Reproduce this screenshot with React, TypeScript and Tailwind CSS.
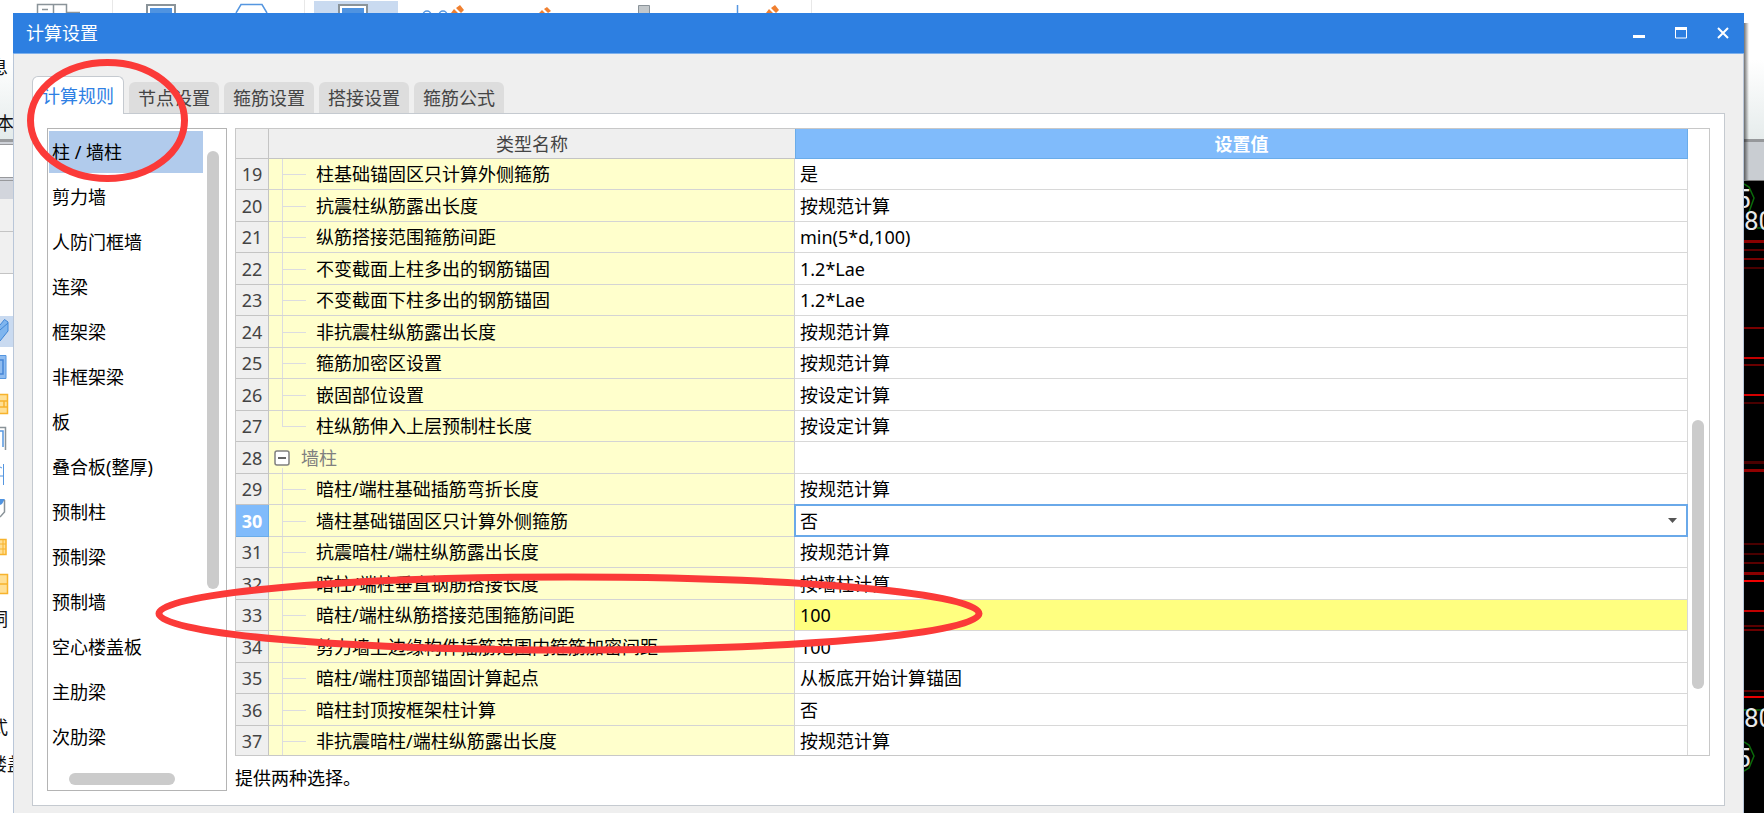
import React from 'react';
import clsx from 'clsx';

interface Setting {
  no: number;
  name: string;
  value: string;
  kind?: 'group' | 'last';
  editing?: boolean;
  marked?: boolean;
}

const tabs = ['计算规则', '节点设置', '箍筋设置', '搭接设置', '箍筋公式'];

const categories = [
  '柱 / 墙柱', '剪力墙', '人防门框墙', '连梁', '框架梁', '非框架梁', '板',
  '叠合板(整厚)', '预制柱', '预制梁', '预制墙', '空心楼盖板', '主肋梁', '次肋梁',
];

const settings: Setting[] = [
  { no: 19, name: '柱基础锚固区只计算外侧箍筋', value: '是' },
  { no: 20, name: '抗震柱纵筋露出长度', value: '按规范计算' },
  { no: 21, name: '纵筋搭接范围箍筋间距', value: 'min(5*d,100)' },
  { no: 22, name: '不变截面上柱多出的钢筋锚固', value: '1.2*Lae' },
  { no: 23, name: '不变截面下柱多出的钢筋锚固', value: '1.2*Lae' },
  { no: 24, name: '非抗震柱纵筋露出长度', value: '按规范计算' },
  { no: 25, name: '箍筋加密区设置', value: '按规范计算' },
  { no: 26, name: '嵌固部位设置', value: '按设定计算' },
  { no: 27, name: '柱纵筋伸入上层预制柱长度', value: '按设定计算', kind: 'last' },
  { no: 28, name: '墙柱', value: '', kind: 'group' },
  { no: 29, name: '暗柱/端柱基础插筋弯折长度', value: '按规范计算' },
  { no: 30, name: '墙柱基础锚固区只计算外侧箍筋', value: '否', editing: true },
  { no: 31, name: '抗震暗柱/端柱纵筋露出长度', value: '按规范计算' },
  { no: 32, name: '暗柱/端柱垂直钢筋搭接长度', value: '按墙柱计算' },
  { no: 33, name: '暗柱/端柱纵筋搭接范围箍筋间距', value: '100', marked: true },
  { no: 34, name: '剪力墙上边缘构件插筋范围内箍筋加密间距', value: '100' },
  { no: 35, name: '暗柱/端柱顶部锚固计算起点', value: '从板底开始计算锚固' },
  { no: 36, name: '暗柱封顶按框架柱计算', value: '否' },
  { no: 37, name: '非抗震暗柱/端柱纵筋露出长度', value: '按规范计算' },
];

// Dimension lines in the drawing area: [y, thickness, colour]
const cadLines: [number, number, string][] = [
  [240, 3, '#8a0000'], [249, 2, '#5a0000'], [258, 2, '#7a0000'], [267, 2, '#4a0000'],
  [327, 2, '#7a0000'], [357, 2, '#c40000'], [364, 2, '#6a0000'], [394, 2, '#d40000'],
  [402, 2, '#4a0000'], [461, 3, '#4a0000'], [469, 3, '#900000'], [543, 2, '#4a0000'],
  [553, 2, '#4a0000'], [562, 2, '#5a0000'], [572, 3, '#8a0000'], [580, 2, '#f00000'],
  [610, 2, '#c00000'], [625, 2, '#5a0000'], [629, 2, '#6a0000'], [690, 2, '#5a0000'],
  [696, 2, '#e80000'],
];

const Toolbar: React.FC = () => (
  <div className="h-[13px] shrink-0 overflow-hidden bg-white">
    <svg width="900" height="13" fill="none" className="block">
      <path d="M37.5 13V4.5h29V13M53.5 4v9M42 9.5h6M67 12.5h13" stroke="#8a9399" strokeWidth="1.5" />
      <path d="M112.5 0v13M304.5 0v13M811.5 0v13" stroke="#e8e8e8" />
      <path d="M147 13V5h28v8" stroke="#8a9399" strokeWidth="2" />
      <path d="M150 8h22v5h-22z" fill="#4f93e0" />
      <path d="M236 13l5-8.500h21l5 8.500" stroke="#5596e0" strokeWidth="1.5" />
      <path d="M314 1h84v12h-84z" fill="#c9daf0" />
      <path d="M339 13V5h28v8" fill="#fff" stroke="#8a9399" strokeWidth="2" />
      <path d="M342 8h22v5h-22z" fill="#4f93e0" />
      <circle cx="427" cy="15" r="4" stroke="#5596e0" strokeWidth="1.5" />
      <circle cx="443" cy="15" r="4" stroke="#5596e0" strokeWidth="1.5" />
      <g fill="#f08030">
        <path d="M460 5l4 5-3 3-5-5zM454 9l4 4h-7z" />
        <path d="M547 7l4 4-3 2-4-4zM542 10l3 3h-6z" />
        <path d="M775 5l4 5-3 3-5-5zM769 9l4 4h-7z" />
      </g>
      <path d="M638.500 13V5.500h11V13" fill="#c3c8cb" stroke="#8a9399" />
      <path d="M737.500 5v8" stroke="#5596e0" strokeWidth="1.5" />
    </svg>
  </div>
);

const SideLabel: React.FC<{ y: number; x: number; text: string }> = ({ y, x, text }) => (
  <text x={x} y={y} fontSize="18" fill="#111">{text}</text>
);

// Right edge of the main window's navigation pane
const SideStrip: React.FC = () => (
  <div className="w-[13px] shrink-0 overflow-hidden bg-white">
    <svg width="13" height="800" viewBox="0 13 13 800" fill="none" className="block">
      <defs>
        <linearGradient id="ribbon" x1="0" y1="0" x2="0" y2="1">
          <stop offset="0" stopColor="#ffffff" />
          <stop offset="1" stopColor="#e4ebeb" />
        </linearGradient>
      </defs>
      <path d="M0 60h13v79H0z" fill="url(#ribbon)" />
      <path d="M0 139h13v3H0z" fill="#9a9c9f" />
      <path d="M0 142h13v3H0z" fill="#cfd2d8" />
      <path d="M0 144h13v1H0zM0 177h13v1H0zM0 180h13v1H0z" fill="#98999c" />
      <path d="M0 178h13v2H0zM0 181h13v18H0z" fill="#d2d5dc" />
      <path d="M0 199h13v74H0z" fill="#f0f0f0" />
      <path d="M0 231.500h13M0 273.500h13" stroke="#c4c4c4" />
      <path d="M0 316h13v31H0z" fill="#c9daf0" />
      <path d="M0 325l4.500-5.500L8 322v9l-8 10z" fill="#7fb5ee" />
      <path d="M0 325l4.500-5.500L8 322v9l-8 10M0 330l8-7" stroke="#3f86d6" />
      <path d="M-1 355.500h7v23h-7z" fill="#8fbcf0" stroke="#5596e0" />
      <path d="M-1 360h4v14h-4" stroke="#4585d6" strokeWidth="1.500" />
      <path d="M-1 394.500h8.500v19H-1z" fill="#ffdf94" stroke="#f7b32c" strokeWidth="1.500" />
      <path d="M0 401h8M0 407h8M4 401v6" stroke="#f7b32c" strokeWidth="1.500" />
      <path d="M0 427.500h5.500V450" stroke="#8a9399" strokeWidth="1.500" />
      <path d="M0 431h3v16" stroke="#5596e0" strokeWidth="1.500" />
      <path d="M3.500 464v21M0 467l2 1M0 476h3" stroke="#5596e0" />
      <path d="M0 499h5l-3 5-2 1z" fill="#4f93e0" />
      <path d="M4.500 500v12L0 517" stroke="#8a9399" strokeWidth="1.500" />
      <path d="M-1 539.500h7v15h-7z" fill="#ffdf94" stroke="#f7b32c" strokeWidth="1.500" />
      <path d="M0 544h6M0 549h6M3 540v14" stroke="#f7b32c" />
      <path d="M-1 574.500h8.500v19H-1z" fill="#ffdf94" stroke="#f7b32c" strokeWidth="1.500" />
      <path d="M0 584h8" stroke="#f7b32c" strokeWidth="1.500" />
      <SideLabel x={-10} y={74} text="息" />
      <SideLabel x={-4} y={130} text="本" />
      <SideLabel x={-10} y={626} text="洞" />
      <SideLabel x={-10} y={734} text="式" />
      <SideLabel x={-11} y={771} text="楼盖" />
    </svg>
  </div>
);

const DrawingStrip: React.FC = () => (
  <div className="w-5 shrink-0 overflow-hidden bg-black">
    <svg width="20" height="800" viewBox="0 13 20 800" fill="none" className="block">
      <defs>
        <linearGradient id="ribbonRight" x1="0" y1="0" x2="0" y2="1">
          <stop offset="0" stopColor="#ffffff" />
          <stop offset="1" stopColor="#e6ecec" />
        </linearGradient>
        <linearGradient id="shade" x1="0" y1="0" x2="1" y2="0">
          <stop offset="0" stopColor="#000" stopOpacity="0.55" />
          <stop offset="1" stopColor="#000" stopOpacity="0" />
        </linearGradient>
      </defs>
      <path d="M0 13h20v47H0z" fill="#fff" />
      <path d="M0 60h20v79H0z" fill="url(#ribbonRight)" />
      <path d="M0 139h20v3H0z" fill="#96989b" />
      <path d="M0 142h20v38H0z" fill="#c9cdd2" />
      <path d="M0 180h20v1H0z" fill="#777" />
      <path d="M0 23h5v157H0z" fill="url(#shade)" />
      {cadLines.map(([y, thickness, color]) => (
        <rect key={y} x="0" y={y} width="20" height={thickness} fill={color} />
      ))}
      <path d="M0 184l5 3 5 11-5 14M0 742l5 3 5 11-5 12-5 3M13 228h7M0 710h20" stroke="#0b6b0b" strokeWidth="1.500" />
      <g fill="#e8e8e8" fontSize="26" className="font-[Roboto]">
        <text x="-8" y="208">5</text>
        <text x="0" y="230">80</text>
        <text x="-8" y="767">5</text>
        <text x="0" y="727">80</text>
      </g>
    </svg>
  </div>
);

const TitleBar: React.FC = () => (
  <header className="flex h-[41px] shrink-0 items-center justify-between border-b border-[#7db0ec] bg-[#2d7fe1] pr-[15px] pl-[13px] text-white">
    <h1 className="text-[18px] leading-6">计算设置</h1>
    <div className="flex gap-[30px]">
      <button type="button" aria-label="最小化">
        <svg width="12" height="12" className="block"><path d="M0 8h12v3H0z" fill="#fff" /></svg>
      </button>
      <button type="button" aria-label="最大化">
        <svg width="12" height="12" fill="none" className="block">
          <path d="M.5 1h11v10H.5z" stroke="#fff" />
          <path d="M0 0h12v3H0z" fill="#fff" />
        </svg>
      </button>
      <button type="button" aria-label="关闭">
        <svg width="12" height="12" fill="none" className="block">
          <path d="M1 1l10 10M11 1L1 11" stroke="#fff" strokeWidth="2" />
        </svg>
      </button>
    </div>
  </header>
);

const CategoryList: React.FC = () => (
  <div className="flex w-[180px] shrink-0 flex-col border border-[#b4b4b4] bg-white">
    <div className="flex min-h-0 flex-1">
      <ul className="flex flex-1 flex-col gap-[3px] pt-[2px] pl-px">
        {categories.map((item, i) => (
          <li key={item}>
            <button
              type="button"
              className={clsx('flex h-[42px] w-full items-center pl-[3px] leading-6', i === 0 && 'bg-[#b1cbec]')}
            >
              {item}
            </button>
          </li>
        ))}
      </ul>
      <div className="w-[23px] pt-[22px] pl-[4px]">
        <div className="h-[438px] w-3 rounded-full bg-[#cbcbcb]" />
      </div>
    </div>
    <div className="h-[17px] pl-[21px]">
      <div className="h-3 w-[106px] rounded-full bg-[#cbcbcb]" />
    </div>
  </div>
);

// Tree guides drawn at the left of the name column
const TreeGuide: React.FC<{ kind?: Setting['kind'] }> = ({ kind }) => {
  if (kind === 'group') {
    return (
      <span aria-hidden="true" className="absolute bottom-0 left-[13px] h-[5px] w-px bg-[#dcdce0]" />
    );
  }
  return (
    <span aria-hidden="true" className="absolute inset-y-0 left-[13px] w-6">
      <span className={clsx('absolute top-0 left-0 w-px bg-[#dcdce0]', kind === 'last' ? 'h-1/2' : 'h-full')} />
      <span className="absolute top-1/2 left-0 h-px w-full bg-[#dcdce0]" />
    </span>
  );
};

const SettingRow: React.FC<{ row: Setting }> = ({ row }) => (
  <tr className="odd:h-[31px] even:h-8">
    <th
      scope="row"
      className={clsx(
        'border-r border-b p-0 text-center leading-6',
        row.editing
          ? 'border-[#6aace9] bg-[#80bbfb] font-bold text-white'
          : 'border-[#c4c4c4] bg-[#efefef] font-normal text-[#444]',
      )}
    >
      {row.no}
    </th>
    <td className="relative border-r border-b border-[#d4d4d4] bg-[#ffffcc] p-0 leading-6">
      <TreeGuide kind={row.kind} />
      {row.kind === 'group' ? (
        <div className="flex items-center gap-[11px] pl-[5px] text-[#808080]">
          <button type="button" aria-label="折叠">
            <svg width="16" height="16" fill="none" className="block">
              <rect x="1" y="1" width="14" height="14" rx="2" fill="#fff" stroke="#808080" strokeWidth="1.500" />
              <path d="M4 8h8" stroke="#333" strokeWidth="1.500" />
            </svg>
          </button>
          <span>{row.name}</span>
        </div>
      ) : (
        <span className="pl-[47px]">{row.name}</span>
      )}
    </td>
    <td
      className={clsx(
        'relative border-r border-b border-[#d8d8d8] p-0 leading-6',
        row.marked ? 'bg-[#ffff80]' : 'bg-white',
      )}
    >
      {row.editing ? (
        <>
          <select
            aria-label={row.name}
            defaultValue={row.value}
            className="absolute -inset-px w-[calc(100%+2px)] appearance-none border-2 border-[#6aa9e9] bg-white pl-[4px] leading-6 outline-none"
          >
            <option>否</option>
            <option>是</option>
          </select>
          <svg width="9" height="5" className="pointer-events-none absolute top-1/2 right-[10px] -mt-[3px]">
            <path d="M0 0h9L4.500 5z" fill="#555" />
          </svg>
        </>
      ) : (
        <span className="pl-[5px]">{row.value}</span>
      )}
    </td>
  </tr>
);

const SettingsTable: React.FC = () => (
  <div className="flex min-h-0 flex-1 overflow-hidden border border-[#c8c8c8] bg-white">
    <div className="min-w-0 flex-1">
      <table className="w-full table-fixed border-separate border-spacing-0">
        <colgroup>
          <col className="w-[33px]" />
          <col className="w-[526px]" />
          <col />
        </colgroup>
        <thead>
          <tr className="h-[30px] bg-[#efefef] text-[#444]">
            <th aria-label="序号" className="border-r border-b border-[#c4c4c4] p-0" />
            <th className="border-b border-[#c4c4c4] p-0 leading-6 font-normal">类型名称</th>
            <th className="border border-t-0 border-[#6aace9] bg-[#80bbfb] p-0 leading-6 font-bold text-white">设置值</th>
          </tr>
        </thead>
        <tbody>
          {settings.map((row) => (
            <SettingRow key={row.no} row={row} />
          ))}
        </tbody>
      </table>
    </div>
    <div className="w-[21px] pt-[291px] pl-[4px]">
      <div className="h-[269px] w-3 rounded-full bg-[#cbcbcb]" />
    </div>
  </div>
);

const SettingsDialog: React.FC = () => (
  <main className="flex min-w-0 flex-1 flex-col bg-[#efefef]">
    <TitleBar />
    <div className="flex min-h-0 flex-1 flex-col border-x border-[#b9c6d8] px-[18px] pt-[22px] pb-[7px]">
      <div role="tablist" className="z-10 -mb-px flex items-end gap-[5px]">
        {tabs.map((tab, i) => (
          <button
            key={tab}
            type="button"
            role="tab"
            aria-selected={i === 0}
            className={clsx(
              'rounded-t-md leading-6',
              i === 0
                ? 'h-[38px] border border-b-0 border-[#c5cad0] bg-white px-[9px] text-[#2f80e4]'
                : 'mb-px h-[31px] bg-[#dddddd] px-[9px] text-[#444]',
            )}
          >
            {tab}
          </button>
        ))}
      </div>
      <div className="flex min-h-0 flex-1 gap-2 border border-[#c5cad0] bg-white p-[14px]">
        <CategoryList />
        <section className="flex min-w-0 flex-1 flex-col">
          <SettingsTable />
          <p className="flex h-[35px] items-end pb-px leading-6">提供两种选择。</p>
        </section>
      </div>
    </div>
  </main>
);

const Annotations: React.FC = () => (
  <svg
    width="1000"
    height="700"
    fill="none"
    stroke="#fb3a38"
    strokeWidth="7"
    className="pointer-events-none absolute top-0 left-0 z-20"
  >
    <ellipse cx="107.500" cy="120.500" rx="77" ry="58" />
    <ellipse cx="569" cy="613.500" rx="410" ry="36.500" />
  </svg>
);

const App: React.FC = () => (
  <div className="relative flex h-screen flex-col overflow-hidden bg-white font-['Noto_Sans','Noto_Sans_CJK_SC',sans-serif] text-[18px] text-black">
    <Toolbar />
    <div className="flex min-h-0 flex-1">
      <SideStrip />
      <SettingsDialog />
      <DrawingStrip />
    </div>
    <Annotations />
  </div>
);

export default App;
